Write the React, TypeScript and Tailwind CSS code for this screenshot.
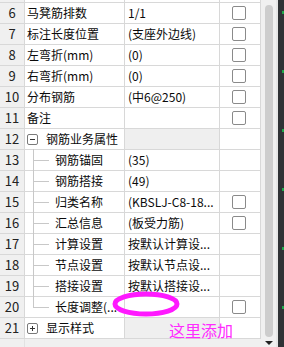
import React from 'react';

type Row = {
  no: number;
  name: string;
  value?: string;
  check?: boolean;
  group?: 'open' | 'closed';
  child?: boolean;
  last?: boolean;
};

const rows: Row[] = [
  { no: 6, name: '马凳筋排数', value: '1/1', check: true },
  { no: 7, name: '标注长度位置', value: '(支座外边线)', check: true },
  { no: 8, name: '左弯折(mm)', value: '(0)', check: true },
  { no: 9, name: '右弯折(mm)', value: '(0)', check: true },
  { no: 10, name: '分布钢筋', value: '(中6@250)', check: true },
  { no: 11, name: '备注', value: '', check: true },
  { no: 12, name: '钢筋业务属性', group: 'open' },
  { no: 13, name: '钢筋锚固', value: '(35)', child: true },
  { no: 14, name: '钢筋搭接', value: '(49)', child: true },
  { no: 15, name: '归类名称', value: '(KBSLJ-C8-18...', check: true, child: true },
  { no: 16, name: '汇总信息', value: '(板受力筋)', check: true, child: true },
  { no: 17, name: '计算设置', value: '按默认计算设...', child: true },
  { no: 18, name: '节点设置', value: '按默认节点设...', child: true },
  { no: 19, name: '搭接设置', value: '按默认搭接设...', child: true },
  { no: 20, name: '长度调整(...', value: '', check: true, child: true, last: true },
  { no: 21, name: '显示样式', group: 'closed' },
];

const font = { fontFamily: '"Noto Sans CJK SC", "Liberation Sans", sans-serif' };

const ToggleBox = ({ open }: { open: boolean }) => (
  <span className="relative flex h-[11px] w-[11px] items-center justify-center rounded-[2px] border border-[#7a7a7a] bg-white">
    <span className="absolute h-[1px] w-[5px] bg-[#333]" />
    {!open && <span className="absolute h-[5px] w-[1px] bg-[#333]" />}
  </span>
);

const NameCell = ({ row }: { row: Row }) => {
  if (row.group) {
    return (
      <div className="flex h-full items-center gap-[8px]">
        <ToggleBox open={row.group === 'open'} />
        <span>{row.name}</span>
      </div>
    );
  }
  if (row.child) {
    return (
      <div className="relative flex h-full items-center pl-[28px]">
        <span className={`absolute left-[6px] top-[-1px] w-[1px] bg-[#c8c8c8] ${row.last ? 'h-[11px]' : 'h-[21px]'}`} />
        <span className="absolute left-[6px] top-[10px] h-[1px] w-[16px] bg-[#c8c8c8]" />
        <span>{row.name}</span>
      </div>
    );
  }
  return <div className="flex h-full items-center">{row.name}</div>;
};

export default function App() {
  return (
    <div className="relative flex h-[347px] w-[284px] overflow-hidden bg-[#f0f0f0] text-[12px] text-[#0a0a0a]" style={font}>
      <div className="flex w-[261px] flex-col">
        <div className="flex h-[3px] border-b border-[#d8d8d8]">
          <div className="w-[25px] border-r border-[#d8d8d8] bg-[#f0f0f0]" />
          <div className="w-[100px] border-r border-[#d8d8d8] bg-white" />
          <div className="w-[95px] border-r border-[#d8d8d8] bg-white" />
          <div className="w-[41px] border-r border-[#d8d8d8] bg-white" />
        </div>
        {rows.map(row => (
          <div key={row.no} className="flex h-[21px] border-b border-[#d8d8d8]">
            <div className="flex w-[25px] items-center justify-center border-r border-[#d8d8d8] bg-[#f0f0f0] text-[13px] text-[#222]">
              {row.no}
            </div>
            <div className="w-[100px] border-r border-[#d8d8d8] bg-white pl-[2px] leading-none">
              <NameCell row={row} />
            </div>
            <div className={`flex w-[95px] items-center overflow-hidden whitespace-nowrap border-r border-[#d8d8d8] pl-[3px] ${row.group ? 'bg-[#efefef]' : 'bg-white'}`}>
              {row.value}
            </div>
            <div className="flex w-[41px] items-center justify-center border-r border-[#d8d8d8] bg-white pr-[2px]">
              {row.check && <span className="h-[14px] w-[14px] rounded-[2px] border border-[#8a8a8a] bg-white" />}
            </div>
          </div>
        ))}
        <div className="flex flex-1">
          <div className="w-[25px] border-r border-[#e2e2e2]" />
        </div>
      </div>

      <div className="flex w-[15px] flex-col items-center bg-[#f0f0f0] pt-[5px]">
        <div className="h-[332px] w-[8px] rounded-[4px] bg-[#cdcdcd]" />
        <div className="mt-[4px] h-0 w-0 border-x-[4px] border-t-[4px] border-x-transparent border-t-[#222]" />
      </div>

      <div className="flex w-[8px] bg-[#e6e6e6] pl-[2px]">
        <div className="flex flex-1 justify-end bg-[#2f3235]">
          <div className="flex flex-col gap-[56px] pt-[11px]">
            {[0, 1, 2, 3, 4, 5].map(i => (
              <span key={i} className="h-[3px] w-[2px] bg-[#1fa84a]" />
            ))}
          </div>
        </div>
      </div>

      <svg className="absolute left-[110px] top-[288px]" width="74" height="32" viewBox="0 0 74 32">
        <ellipse cx="36" cy="16" rx="31" ry="10" fill="none" stroke="#ff19ff" strokeWidth="5" />
      </svg>
      <span className="absolute left-[169px] top-[322px] text-[16px] leading-none text-[#ff2bff]">这里添加</span>
    </div>
  );
}
